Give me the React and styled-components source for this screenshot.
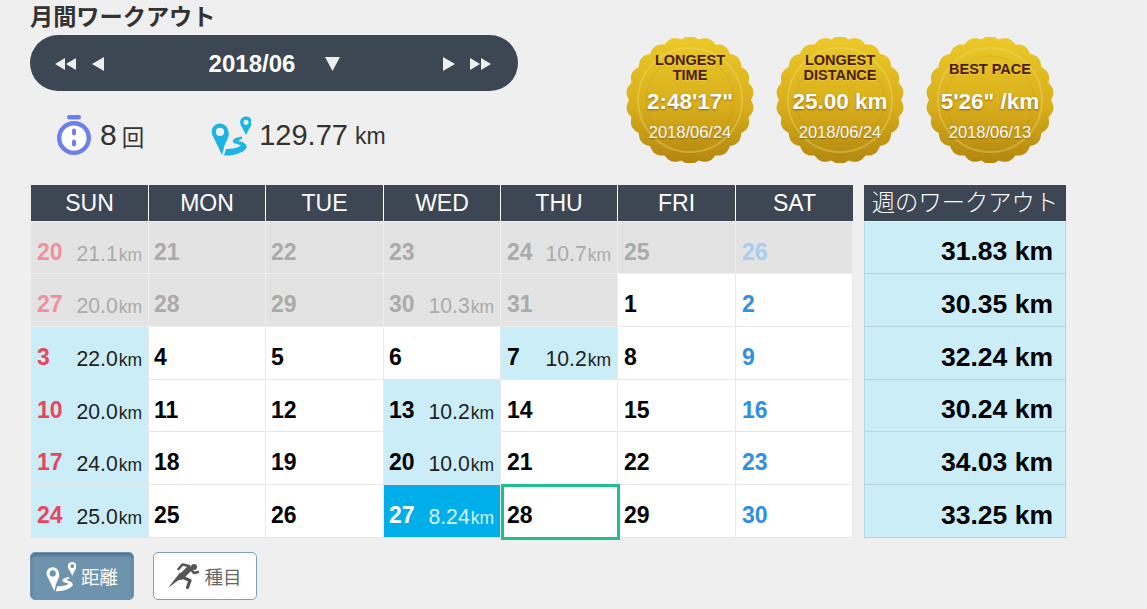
import React from "react";
import styled, { createGlobalStyle } from "styled-components";

const GlobalStyle = createGlobalStyle`
  html, body { margin: 0; padding: 0; background: #efefef; overflow: hidden; }
  body { font-family: "Liberation Sans", "Noto Sans CJK JP", sans-serif; color: #333; }
`;

const Page = styled.div`
  width: 1147px;
  height: 609px;
  padding-left: 30px;
  box-sizing: border-box;
`;

const Top = styled.div`
  display: flex;
  height: 185px;
`;

const Summary = styled.div`
  width: 488px;
`;

const Title = styled.h2`
  margin: 0;
  height: 35px;
  font: 700 23.2px/31px "Noto Sans CJK JP", sans-serif;
  color: #333;
  white-space: nowrap;
`;

const MonthNav = styled.div`
  height: 56px;
  border-radius: 28px;
  background: #3d4653;
  display: flex;
  align-items: center;
  justify-content: space-between;
  padding: 2px 26px 0 25px;
  box-sizing: border-box;
  color: #fff;
`;

const Arrows = styled.div`
  display: flex;
  align-items: center;
  gap: 14px;
`;

const Month = styled.div`
  display: flex;
  align-items: center;
  gap: 30px;
  font-size: 24px;
  font-weight: 700;
  margin-left: 2px;
`;

const Stats = styled.div`
  display: flex;
  align-items: center;
  margin-top: 22px;
  padding-left: 27px;
  height: 44px;
`;

const Stat = styled.div`
  display: flex;
  align-items: center;
  margin-right: ${(props) => props.$gap || 0}px;
`;

const StatValue = styled.span`
  font-size: ${(props) => props.$size}px;
  margin-left: ${(props) => props.$left}px;
  color: #333;
`;

const StatUnit = styled.span`
  font-size: ${(props) => props.$size}px;
  margin-left: ${(props) => props.$left}px;
  margin-top: 2px;
  color: #333;
`;

const Medals = styled.div`
  display: flex;
  gap: 22px;
  margin: 37px 0 0 108px;
`;

const Medal = styled.div`
  position: relative;
  width: 128px;
  height: 126px;
  display: flex;
  flex-direction: column;
  align-items: center;
  padding-top: 16px;
  box-sizing: border-box;
`;

const MedalShape = styled.svg`
  position: absolute;
  inset: 0;
`;

const MedalLabel = styled.div`
  position: relative;
  box-sizing: border-box;
  font-size: 14.5px;
  font-weight: 700;
  line-height: 15px;
  color: #4a1d04;
  text-align: center;
  text-shadow: 0 1px 0 rgba(255, 230, 120, 0.4);
  min-height: 30px;
  padding-top: ${(props) => (props.$single ? 3 : 0)}px;
  display: flex;
  align-items: center;
`;

const MedalValue = styled.div`
  position: relative;
  margin-top: 5px;
  font-size: 22.5px;
  font-weight: 700;
  line-height: 28px;
  color: #fff;
  text-shadow: 0 1px 2px rgba(90, 50, 0, 0.6);
  white-space: nowrap;
`;

const MedalDate = styled.div`
  position: relative;
  margin-top: 6px;
  font-size: 16.5px;
  line-height: 20px;
  color: #fff;
  text-shadow: 0 1px 1px rgba(90, 50, 0, 0.5);
`;

const Board = styled.div`
  display: flex;
  gap: 11px;
  align-items: flex-start;
`;

const Calendar = styled.div`
  display: grid;
  margin-left: 1px;
  grid-template-columns: 118px 117px 118px 117px 117px 118px 117px;
  grid-template-rows: 37px 52px 53px 53px 52px 53px 53px;
`;

const DayName = styled.div`
  background: #3d4653;
  color: #fff;
  font-size: 23px;
  height: 36px;
  line-height: 36px;
  text-align: center;
  border-right: 1px solid #fff;
  box-sizing: border-box;
  &:nth-child(7) { border-right: 0; }
`;

const cellBg = { out: "#e3e3e3", plain: "#fff", run: "#cbedf8", latest: "#00aeea" };

const Cell = styled.div`
  position: relative;
  display: flex;
  align-items: center;
  justify-content: space-between;
  box-sizing: border-box;
  padding: 9px 6px 0 ${(props) => (props.$col >= 1 && props.$col <= 3 ? 5 : 6)}px;
  background: ${(props) => cellBg[props.$kind]};
  border-right: 1px solid ${(props) => (props.$kind === "out" ? "#eeeeee" : "#e9e9e9")};
  border-bottom: 1px solid ${(props) => (props.$kind === "out" ? "#eeeeee" : "#e6e6e6")};
`;

const TodayFrame = styled.span`
  position: absolute;
  inset: -1px -3px -3px 0;
  border: 3px solid #1dc08d;
  z-index: 1;
`;

const dayColor = (props) => {
  if (props.$kind === "latest") return "#fff";
  if (props.$kind === "out") {
    if (props.$col === 0) return "#f2909f";
    if (props.$col === 6) return "#a8cdf2";
    return "#ababab";
  }
  if (props.$col === 0) return "#e8455f";
  if (props.$col === 6) return "#2f8fe3";
  return "#000";
};

const DayNumber = styled.span`
  font-size: 23px;
  font-weight: 700;
  color: ${dayColor};
`;

const Distance = styled.span`
  font-size: 21.2px;
  margin-top: 3px;
  color: ${(props) => (props.$kind === "out" ? "#ababab" : props.$kind === "latest" ? "#d6f3fd" : "#222")};
`;

const Km = styled.small`
  font-size: 17.5px;
  margin-left: 1px;
`;

const Weekly = styled.div`
  width: 202px;
  display: flex;
  flex-direction: column;
`;

const WeeklyHead = styled.div`
  background: #3d4653;
  color: #fff;
  height: 36px;
  margin-bottom: 1px;
  font: 300 23.3px/32px "Noto Sans CJK JP", sans-serif;
  white-space: nowrap;
  text-align: center;
`;

const WeeklyRow = styled.div`
  height: ${(props) => props.$h}px;
  box-sizing: border-box;
  background: #cbedf8;
  border: 1px solid #b9d5df;
  border-top: 0;
  display: flex;
  align-items: center;
  justify-content: flex-end;
  padding: 8px 12px 0 0;
  font-size: 26.5px;
  font-weight: 700;
  color: #000;
`;

const Tabs = styled.div`
  display: flex;
  gap: 19px;
  margin-top: 14px;
`;

const Tab = styled.button`
  width: 104px;
  height: 48px;
  box-sizing: border-box;
  border-radius: 5px;
  display: flex;
  align-items: center;
  justify-content: center;
  gap: 5px;
  padding: 0;
  font: 400 18.5px "Noto Sans CJK JP", sans-serif;
  background: ${(props) => (props.$active ? "#6d93ad" : "#fff")};
  color: ${(props) => (props.$active ? "#fff" : "#666")};
  border: 1px solid ${(props) => (props.$active ? "#6d93ad" : "#7fa0b6")};
  ${(props) => props.$active && "box-shadow: inset 0 3px 3px rgba(40, 70, 95, 0.35);"}
`;

const Triangle = ({ dir }) => {
  const points = {
    left: "13,0 13,14 1,7",
    right: "0,0 0,14 12,7",
    down: "0,0 14,0 7,13",
  };
  return (
    <svg width={dir === "down" ? 15 : 13} height={14} viewBox={dir === "down" ? "0 0 14 13" : "0 0 13 14"}>
      <polygon points={points[dir]} fill="#eee" />
    </svg>
  );
};

const DoubleTriangle = ({ dir }) => (
  <svg width="22" height="14" viewBox="0 0 22 14">
    <polygon points={dir === "left" ? "10,1 10,13 0,7" : "0,1 0,13 10,7"} fill="#eee" />
    <polygon points={dir === "left" ? "21,1 21,13 11,7" : "11,1 11,13 21,7"} fill="#eee" />
  </svg>
);

const Stopwatch = () => (
  <svg width="34" height="40" viewBox="0 0 34 40">
    <rect x="10" y="0" width="14" height="4.5" rx="2.2" fill="#6b80e8" />
    <circle cx="17" cy="23" r="14.8" fill="#fff" stroke="#6b80e8" strokeWidth="4.4" />
    <rect x="15" y="13.5" width="4" height="7" rx="2" fill="#6b80e8" />
    <rect x="15" y="24.5" width="4" height="7" rx="2" fill="#6b80e8" />
  </svg>
);

const RouteIcon = ({ color, size = 40 }) => (
  <svg width={size} height={size * 1.05} viewBox="6 8 40 42">
    <path
      fillRule="evenodd"
      fill={color}
      d="M15 17.5c-4.900 0-8.300 3.700-8.300 8.200 0 2.200.9 4.200 2.200 6.200L17 49l1.500-5.500c.5-3.700 3-8.600 4.300-11.300 1-2 1.100-3.900.8-6-.5-4.900-4-8.700-8.600-8.700zm0 4.300a4.100 4.100 0 1 1 0 8.200 4.100 4.100 0 0 1 0-8.200z"
    />
    <path
      fillRule="evenodd"
      fill={color}
      d="M41 10.500c-3.400 0-5.900 2.500-5.900 5.700 0 2.300 1.100 3.900 2.200 5.600L41 29l3.700-7.200c1.100-1.700 2.200-3.300 2.200-5.600 0-3.200-2.500-5.700-5.900-5.700zm0 3.300a2.500 2.500 0 1 1 0 5 2.500 2.500 0 0 1 0-5z"
    />
    <path
      fill={color}
      d="M37 30.500C30 31.500 27 33.500 28 36c1 2 6 2 8 3.500-3 2.500-9 3.500-15 3.500L19 49.500c9 .5 19-2.500 22.500-7.500 1.500-3.500-3.500-6-6.500-6.500-2-.5-1.500-2 2-2.500z"
    />
  </svg>
);

const RunnerIcon = () => (
  <svg width="31" height="26" viewBox="0 0 31 26" fill="none" stroke="#555" strokeLinejoin="round" strokeLinecap="round">
    <circle cx="26" cy="4" r="3" fill="#555" stroke="none" />
    <path d="M0 25 L12 9.500 L18 15 L10 17.500Z" fill="#555" stroke="none" />
    <path d="M21 6 L13.500 13.500" strokeWidth="6" />
    <path d="M14 14 L22 17.500 L19.500 24.500" strokeWidth="3.200" />
    <path d="M21 3 L14.500 1.500 L10.500 6" strokeWidth="2.600" />
    <path d="M21 4 L26 10 L30 9" strokeWidth="2.600" />
  </svg>
);

const scallopPath = (cx, cy, r, depth, n) => {
  let d = "";
  const steps = n * 8;
  for (let i = 0; i <= steps; i++) {
    const a = (i / steps) * Math.PI * 2;
    const rr = r - depth + depth * Math.abs(Math.sin((a * n) / 2));
    const x = cx + rr * Math.cos(a);
    const y = cy + rr * Math.sin(a);
    d += `${i === 0 ? "M" : "L"}${x.toFixed(2)} ${y.toFixed(2)}`;
  }
  return d + "Z";
};

const medalOutline = scallopPath(64, 63, 64, 3, 22);

const MedalBack = ({ id }) => (
  <MedalShape width="128" height="126" viewBox="0 0 128 126">
    <defs>
      <linearGradient id={id} x1="0" y1="0" x2="0" y2="1">
        <stop offset="0" stopColor="#ecca28" />
        <stop offset="0.55" stopColor="#d8ae1c" />
        <stop offset="1" stopColor="#b2860f" />
      </linearGradient>
    </defs>
    <path d={medalOutline} fill={`url(#${id})`} />
    <circle cx="64" cy="63" r="52" fill="none" stroke="#f1dc7c" strokeOpacity="0.35" strokeWidth="2" />
    <circle cx="64" cy="63" r="44" fill="none" stroke="#a97d0c" strokeOpacity="0.2" strokeWidth="1" />
  </MedalShape>
);

const medals = [
  { id: "gold1", label: ["LONGEST", "TIME"], value: `2:48'17"`, date: "2018/06/24" },
  { id: "gold2", label: ["LONGEST", "DISTANCE"], value: "25.00 km", date: "2018/06/24" },
  { id: "gold3", label: ["BEST PACE"], value: `5'26" /km`, date: "2018/06/13" },
];

const dayNames = ["SUN", "MON", "TUE", "WED", "THU", "FRI", "SAT"];

// one entry per cell: [day, distance, kind]
const weeks = [
  [[20, "21.1", "out"], [21, "", "out"], [22, "", "out"], [23, "", "out"], [24, "10.7", "out"], [25, "", "out"], [26, "", "out"]],
  [[27, "20.0", "out"], [28, "", "out"], [29, "", "out"], [30, "10.3", "out"], [31, "", "out"], [1, "", "plain"], [2, "", "plain"]],
  [[3, "22.0", "run"], [4, "", "plain"], [5, "", "plain"], [6, "", "plain"], [7, "10.2", "run"], [8, "", "plain"], [9, "", "plain"]],
  [[10, "20.0", "run"], [11, "", "plain"], [12, "", "plain"], [13, "10.2", "run"], [14, "", "plain"], [15, "", "plain"], [16, "", "plain"]],
  [[17, "24.0", "run"], [18, "", "plain"], [19, "", "plain"], [20, "10.0", "run"], [21, "", "plain"], [22, "", "plain"], [23, "", "plain"]],
  [[24, "25.0", "run"], [25, "", "plain"], [26, "", "plain"], [27, "8.24", "latest"], [28, "", "plain", true], [29, "", "plain"], [30, "", "plain"]],
];

const weeklyTotals = [
  ["31.83 km", 52],
  ["30.35 km", 53],
  ["32.24 km", 53],
  ["30.24 km", 52],
  ["34.03 km", 53],
  ["33.25 km", 53],
];

function App() {
  return (
    <Page>
      <GlobalStyle />
      <Top>
        <Summary>
          <Title>月間ワークアウト</Title>
          <MonthNav>
            <Arrows>
              <DoubleTriangle dir="left" />
              <Triangle dir="left" />
            </Arrows>
            <Month>
              2018/06
              <Triangle dir="down" />
            </Month>
            <Arrows>
              <Triangle dir="right" />
              <DoubleTriangle dir="right" />
            </Arrows>
          </MonthNav>
          <Stats>
            <Stat $gap={67}>
              <Stopwatch />
              <StatValue $size={30} $left={9}>8</StatValue>
              <StatUnit $size={22.5} $left={5}>回</StatUnit>
            </Stat>
            <Stat>
              <RouteIcon color="#1cb4e2" />
              <StatValue $size={29} $left={8}>129.77</StatValue>
              <StatUnit $size={23} $left={7}>km</StatUnit>
            </Stat>
          </Stats>
        </Summary>
        <Medals>
          {medals.map((medal) => (
            <Medal key={medal.id}>
              <MedalBack id={medal.id} />
              <MedalLabel $single={!medal.label[1]}>
                <span>
                  {medal.label[0]}
                  {medal.label[1] && <br />}
                  {medal.label[1]}
                </span>
              </MedalLabel>
              <MedalValue>{medal.value}</MedalValue>
              <MedalDate>{medal.date}</MedalDate>
            </Medal>
          ))}
        </Medals>
      </Top>
      <Board>
        <Calendar>
          {dayNames.map((name) => (
            <DayName key={name}>{name}</DayName>
          ))}
          {weeks.map((week) =>
            week.map(([day, distance, kind, today], col) => (
              <Cell key={`${kind}-${day}-${col}`} $kind={kind} $col={col}>
                {today && <TodayFrame />}
                <DayNumber $kind={kind} $col={col}>{day}</DayNumber>
                {distance && (
                  <Distance $kind={kind}>
                    {distance}
                    <Km>km</Km>
                  </Distance>
                )}
              </Cell>
            ))
          )}
        </Calendar>
        <Weekly>
          <WeeklyHead>週のワークアウト</WeeklyHead>
          {weeklyTotals.map(([total, h], i) => (
            <WeeklyRow key={i} $h={h}>{total}</WeeklyRow>
          ))}
        </Weekly>
      </Board>
      <Tabs>
        <Tab $active>
          <RouteIcon color="#fff" size={30} />
          距離
        </Tab>
        <Tab>
          <RunnerIcon />
          種目
        </Tab>
      </Tabs>
    </Page>
  );
}

export default App;
